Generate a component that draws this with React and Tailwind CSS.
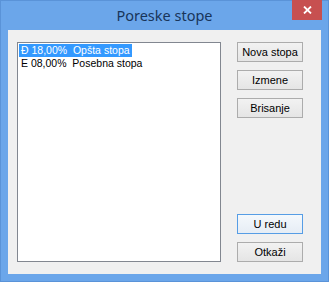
import React, { useState } from "react";

const rates = [
  { code: "Đ", rate: "18,00%", name: "Opšta stopa" },
  { code: "E", rate: "08,00%", name: "Posebna stopa" },
];

const Button = ({ children, primary }) => (
  <button
    className={`w-[66px] h-[20px] border text-[11px] leading-none text-black ${
      primary
        ? "border-[#569de5] bg-gradient-to-b from-[#f4f8fc] to-[#e6edf5]"
        : "border-[#acacac] bg-gradient-to-b from-[#f2f2f2] to-[#e5e5e5]"
    }`}
  >
    {children}
  </button>
);

export default function App() {
  const [selected, setSelected] = useState(0);

  return (
    <div
      className="w-[329px] h-[282px] bg-[#6ba6ea] border border-[#5a93d8] flex flex-col"
      style={{ fontFamily: '"Liberation Sans", Arial, sans-serif' }}
    >
      {/* naslovna traka */}
      <div className="relative h-[29px] flex items-center justify-center">
        <span
          className="text-[14.5px] text-[#18355a] mt-[1px]"
          style={{ fontFamily: '"Noto Sans", "Open Sans", sans-serif' }}
        >
          Poreske stope
        </span>
        <div className="absolute right-[6px] top-[-1px] w-[30px] h-[20px] bg-[#c75050] flex items-center justify-center">
          <svg width="9" height="8" viewBox="0 0 9 8">
            <path d="M1 0.5 L8 7.5 M8 0.5 L1 7.5" stroke="#fff" strokeWidth="1.8" />
          </svg>
        </div>
      </div>

      <div className="mx-[7px] mb-[7px] flex-1 bg-[#f0f0f0] pl-[9px] pt-[12px]">
        <div className="flex gap-[16px]">
          <div className="w-[204px] h-[220px] bg-white border border-[#828790] p-[1px]">
            {rates.map((r, i) => (
              <div
                key={r.code}
                onClick={() => setSelected(i)}
                className="h-[13px] flex items-center text-[10.5px] leading-none"
              >
                <span
                  className={`whitespace-pre px-[2px] h-[13px] flex items-center ${
                    selected === i ? "bg-[#3399ff] text-white" : "text-black"
                  }`}
                >
                  {`${r.code} ${r.rate}  ${r.name}`}
                </span>
              </div>
            ))}
          </div>

          <div className="h-[220px] flex flex-col justify-between">
            <div className="flex flex-col gap-[8px]">
              <Button>Nova stopa</Button>
              <Button>Izmene</Button>
              <Button>Brisanje</Button>
            </div>
            <div className="flex flex-col gap-[8px]">
              <Button primary>U redu</Button>
              <Button>Otkaži</Button>
            </div>
          </div>
        </div>
      </div>
    </div>
  );
}
